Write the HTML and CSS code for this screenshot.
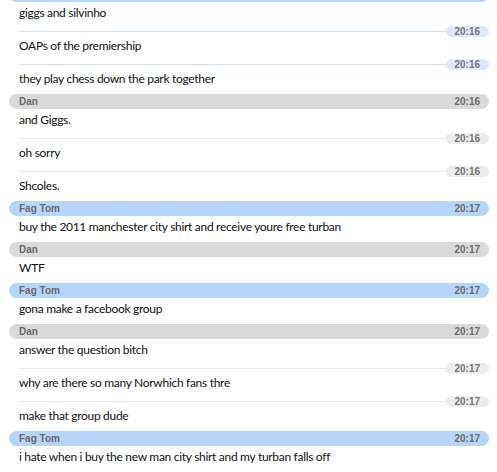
FILE: index.html
```html
<!DOCTYPE html>
<html>
<head>
<meta charset="utf-8">
<link rel="stylesheet" href="styles.css">
</head>
<body>
<div class="chat">
  <div class="group blue">
    <div class="bar"></div>
    <div class="msg">giggs and silvinho</div>
    <div class="sep"><span class="line"></span><span class="pill">20:16</span></div>
    <div class="msg">OAPs of the premiership</div>
    <div class="sep"><span class="line"></span><span class="pill">20:16</span></div>
    <div class="msg">they play chess down the park together</div>
  </div>
  <div class="group gray">
    <div class="bar"><span class="name">Dan</span><span class="time">20:16</span></div>
    <div class="msg">and Giggs.</div>
    <div class="sep"><span class="line"></span><span class="pill">20:16</span></div>
    <div class="msg">oh sorry</div>
    <div class="sep"><span class="line"></span><span class="pill">20:16</span></div>
    <div class="msg">Shcoles.</div>
  </div>
  <div class="group blue">
    <div class="bar"><span class="name">Fag Tom</span><span class="time">20:17</span></div>
    <div class="msg">buy the 2011 manchester city shirt and receive youre free turban</div>
  </div>
  <div class="group gray">
    <div class="bar"><span class="name">Dan</span><span class="time">20:17</span></div>
    <div class="msg">WTF</div>
  </div>
  <div class="group blue">
    <div class="bar"><span class="name">Fag Tom</span><span class="time">20:17</span></div>
    <div class="msg">gona make a facebook group</div>
  </div>
  <div class="group gray">
    <div class="bar"><span class="name">Dan</span><span class="time">20:17</span></div>
    <div class="msg">answer the question bitch</div>
    <div class="sep"><span class="line"></span><span class="pill">20:17</span></div>
    <div class="msg">why are there so many Norwhich fans thre</div>
    <div class="sep"><span class="line"></span><span class="pill">20:17</span></div>
    <div class="msg">make that group dude</div>
  </div>
  <div class="group blue">
    <div class="bar"><span class="name">Fag Tom</span><span class="time">20:17</span></div>
    <div class="msg">i hate when i buy the new man city shirt and my turban falls off</div>
  </div>
</div>
</body>
</html>
```
FILE: styles.css
```css
html, body {
  margin: 0;
  padding: 0;
  background: #ffffff;
}
body {
  overflow: hidden;
}
.chat {
  margin-top: -13px;
  padding: 0 8px 0 9px;
  font-family: "Lato", "Liberation Sans", sans-serif;
}
.bar {
  height: 15px;
  border-radius: 8px;
  display: flex;
  align-items: center;
  justify-content: space-between;
  padding: 0 9px 0 10px;
  font-family: "Liberation Sans", sans-serif;
  font-weight: bold;
  font-size: 10px;
  color: #6b6b6b;
}
.blue .bar { background: #b6d5fa; }
.gray .bar { background: #dadada; }
.msg {
  height: 26px;
  box-sizing: border-box;
  padding: 3px 0 0 10px;
  line-height: 16px;
  font-size: 12px;
  letter-spacing: -0.3px;
  color: #111111;
  white-space: nowrap;
}
.sep {
  height: 7px;
  display: flex;
  align-items: center;
  padding-left: 10px;
}
.line {
  flex: 1;
  height: 1px;
}
.blue .line { background: #d3e3f8; }
.gray .line { background: #e6e6e6; }
.pill {
  width: 43px;
  height: 11px;
  box-sizing: border-box;
  border-radius: 6px;
  font-family: "Liberation Sans", sans-serif;
  font-weight: bold;
  font-size: 10px;
  line-height: 11px;
  color: #777777;
  text-align: right;
  padding-right: 9px;
}
.blue .pill { background: #dde9fb; }
.gray .pill { background: #ececec; }
```
